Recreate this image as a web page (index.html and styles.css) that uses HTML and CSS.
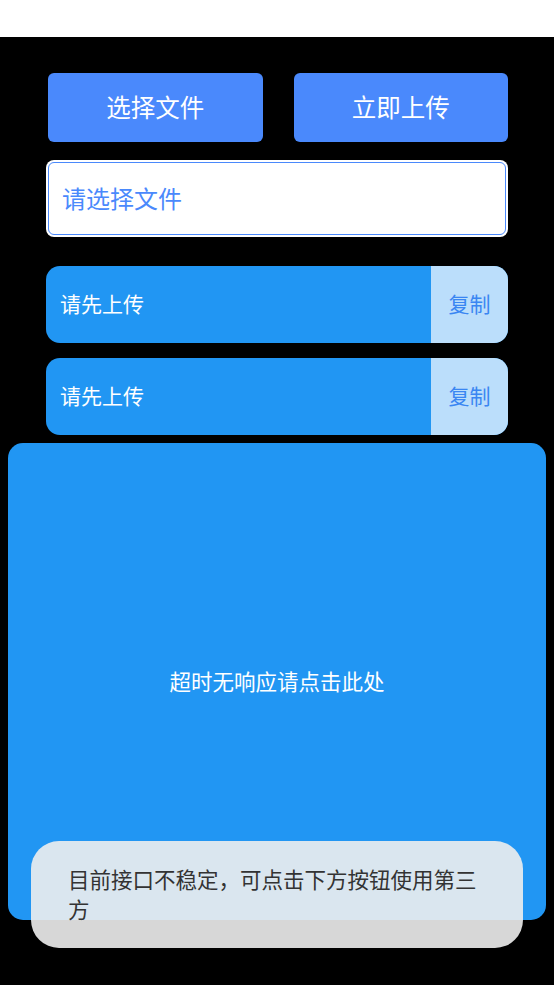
FILE: index.html
```html
<!DOCTYPE html>
<html lang="zh-CN">
<head>
<meta charset="utf-8">
<title>上传</title>
<link rel="stylesheet" href="styles.css">
</head>
<body>
<div class="topbar"></div>
<main class="page">
  <div class="actions">
    <button class="btn">选择文件</button>
    <button class="btn">立即上传</button>
  </div>
  <div class="file-input">请选择文件</div>
  <div class="result-row">
    <span class="result-text">请先上传</span>
    <span class="copy">复制</span>
  </div>
  <div class="result-row">
    <span class="result-text">请先上传</span>
    <span class="copy">复制</span>
  </div>
  <div class="timeout-box">超时无响应请点击此处</div>
</main>
<div class="toast">目前接口不稳定，可点击下方按钮使用第三方</div>
</body>
</html>
```
FILE: styles.css
```css
html, body {
  margin: 0;
  padding: 0;
}
body {
  background: #000;
  width: 554px;
  height: 985px;
  position: relative;
  overflow: hidden;
  font-family: "Noto Sans CJK SC", "Noto Sans", sans-serif;
}
.topbar {
  height: 37px;
  background: #fff;
}
.page {
  display: flex;
  flex-direction: column;
  padding: 36px 46px 0 46px;
}
.actions {
  display: flex;
  gap: 31px;
  margin-left: 2px;
}
.btn {
  flex: 1;
  height: 69px;
  border: none;
  border-radius: 6px;
  background: #4a89fc;
  color: #fff;
  font-family: inherit;
  font-size: 24.5px;
  padding: 0 0 3px 0;
  display: flex;
  align-items: center;
  justify-content: center;
}
.file-input {
  margin-top: 20px;
  height: 73px;
  margin-left: 2px;
  margin-right: 2px;
  box-sizing: border-box;
  border: 1.5px solid #4a89fc;
  border-radius: 6px;
  box-shadow: 0 0 0 2px #fff;
  background: #fff;
  color: #4a89fc;
  font-size: 24px;
  display: flex;
  align-items: center;
  padding: 0 0 3px 13px;
}
.result-row {
  height: 77px;
  margin-top: 15px;
  display: flex;
  border-radius: 14px;
  overflow: hidden;
  background: #2196f3;
}
.file-input + .result-row {
  margin-top: 31px;
}
.result-text {
  flex: 1;
  display: flex;
  align-items: center;
  padding: 0 0 3px 14px;
  color: #fff;
  font-size: 21px;
}
.copy {
  width: 77px;
  background: #bbdefb;
  color: #3a86f2;
  font-size: 21px;
  padding-bottom: 3px;
  display: flex;
  align-items: center;
  justify-content: center;
}
.timeout-box {
  margin: 8px -38px 0 -38px;
  height: 477px;
  border-radius: 15px;
  background: #2196f3;
  color: #fff;
  font-size: 21.5px;
  padding-bottom: 3px;
  box-sizing: border-box;
  display: flex;
  align-items: center;
  justify-content: center;
}
.toast {
  position: absolute;
  left: 31px;
  top: 841px;
  width: 492px;
  height: 107px;
  box-sizing: border-box;
  padding: 23px 37px 0 37px;
  border-radius: 28px;
  background: rgba(238, 238, 238, 0.9);
  color: #333;
  font-size: 21.5px;
  line-height: 30px;
}
```
